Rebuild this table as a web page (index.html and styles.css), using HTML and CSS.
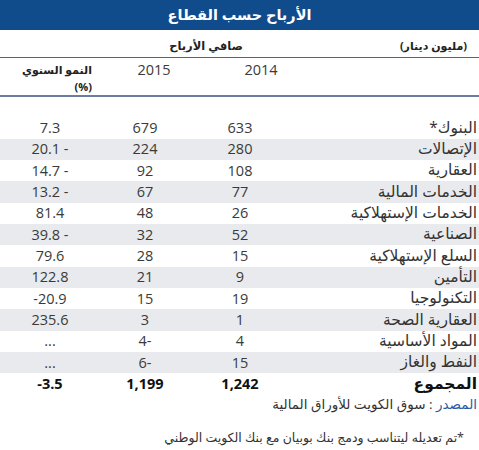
FILE: index.html
```html
<!DOCTYPE html>
<html lang="ar" dir="rtl">
<head>
  <meta charset="UTF-8">
  <title>الأرباح حسب القطاع</title>
  <link rel="stylesheet" href="styles.css">
</head>
<body>

  <h1 class="title">الأرباح حسب القطاع</h1>

  <table class="profits">
    <colgroup>
      <col class="c-label">
      <col class="c-y14">
      <col class="c-y15">
      <col class="c-growth">
    </colgroup>
    <thead>
      <tr class="h-top">
        <th class="h-unit">(مليون دينار)</th>
        <th colspan="2" class="h-net">صافي الأرباح</th>
        <td></td>
      </tr>
      <tr class="h-years">
        <td></td>
        <th class="h-y14">2014</th>
        <th class="h-y15">2015</th>
        <th class="h-growth">النمو السنوي<br>(%)</th>
      </tr>
    </thead>
    <tbody>
      <tr class="gap"><td colspan="4"></td></tr>
      <tr><td class="label">البنوك*</td><td>633</td><td>679</td><td>7.3</td></tr>
      <tr class="alt"><td class="label">الإتصالات</td><td>280</td><td>224</td><td>20.1 -</td></tr>
      <tr><td class="label">العقارية</td><td>108</td><td>92</td><td>14.7 -</td></tr>
      <tr class="alt"><td class="label">الخدمات المالية</td><td>77</td><td>67</td><td>13.2 -</td></tr>
      <tr><td class="label">الخدمات الإستهلاكية</td><td>26</td><td>48</td><td>81.4</td></tr>
      <tr class="alt"><td class="label">الصناعية</td><td>52</td><td>32</td><td>39.8 -</td></tr>
      <tr><td class="label">السلع الإستهلاكية</td><td>15</td><td>28</td><td>79.6</td></tr>
      <tr class="alt"><td class="label">التأمين</td><td>9</td><td>21</td><td>122.8</td></tr>
      <tr><td class="label">التكنولوجيا</td><td>19</td><td>15</td><td>-20.9</td></tr>
      <tr class="alt"><td class="label">العقارية الصحة</td><td>1</td><td>3</td><td>235.6</td></tr>
      <tr><td class="label">المواد الأساسية</td><td>4</td><td>4-</td><td>...</td></tr>
      <tr class="alt"><td class="label">النفط والغاز</td><td>15</td><td>6-</td><td>...</td></tr>
      <tr class="total"><td class="label">المجموع</td><td>1,242</td><td>1,199</td><td>-3.5</td></tr>
    </tbody>
  </table>

  <p class="source"><span class="source-key">المصدر</span> : سوق الكويت للأوراق المالية</p>
  <p class="note">*تم تعديله ليتناسب ودمج بنك بوبيان مع بنك الكويت الوطني</p>

</body>
</html>
```

FILE: styles.css
```css
body {
  margin: 0;
  width: 479px;
  font-family: 'Open Sans', 'DejaVu Sans', sans-serif;
  background-color: #fff;
  color: #3a3a3a;
}
.title {
  margin: 0;
  height: 30px;
  line-height: 30px;
  background-color: #104b8b;
  color: #fff;
  font-size: 14.5px;
  font-weight: bold;
  text-align: center;
}
.profits {
  width: 479px;
  border-collapse: collapse;
  table-layout: fixed;
}
.c-label { width: 189px; }
.c-y14 { width: 100px; }
.c-y15 { width: 90px; }
.c-growth { width: 100px; }
.profits th,
.profits td {
  padding: 0;
  text-align: center;
  font-size: 14.5px;
  line-height: 20px;
  direction: ltr;
}
.profits th {
  color: #222;
  font-weight: bold;
  font-size: 11.5px;
  direction: rtl;
}
.h-top {
  height: 27px;
  border-bottom: 1px solid #3f68a3;
}
.h-top th {
  vertical-align: bottom;
  padding-bottom: 1px;
}
.h-net {
  padding-left: 22px !important;
}
.h-unit {
  text-align: right !important;
  padding-right: 12px !important;
  font-size: 11px !important;
}
.h-years {
  height: 38px;
  border-bottom: 2px solid #6b7ea0;
}
.h-years th {
  vertical-align: top;
  padding-top: 3px;
  line-height: 17px;
}
.h-growth {
  text-align: right !important;
  padding-right: 8px !important;
  font-size: 11px !important;
}
.h-y15,
.h-y14 {
  font-weight: normal !important;
  font-size: 14.5px !important;
  color: #3a3a3a !important;
}
.h-y15 { padding-left: 18px !important; }
.h-y14 { padding-left: 42px !important; }
.gap td {
  height: 21px;
}
.profits tbody tr {
  height: 21.33px;
}
.alt td {
  background-color: #e8eaed;
}
.label {
  direction: rtl !important;
  text-align: right !important;
  padding: 0 2px 3px 0 !important;
  line-height: 18px !important;
  color: #333;
  font-size: 15.5px !important;
}
.total td {
  font-weight: bold;
  color: #111;
}
.source {
  margin: 0;
  padding-right: 2px;
  height: 19px;
  line-height: 19px;
  text-align: right;
  font-size: 13.5px;
  color: #333;
}
.source-key {
  color: #2a5ca6;
}
.note {
  margin: 14px 0 0;
  padding-right: 15px;
  line-height: 19px;
  text-align: right;
  font-size: 12.5px;
  color: #333;
}
```
